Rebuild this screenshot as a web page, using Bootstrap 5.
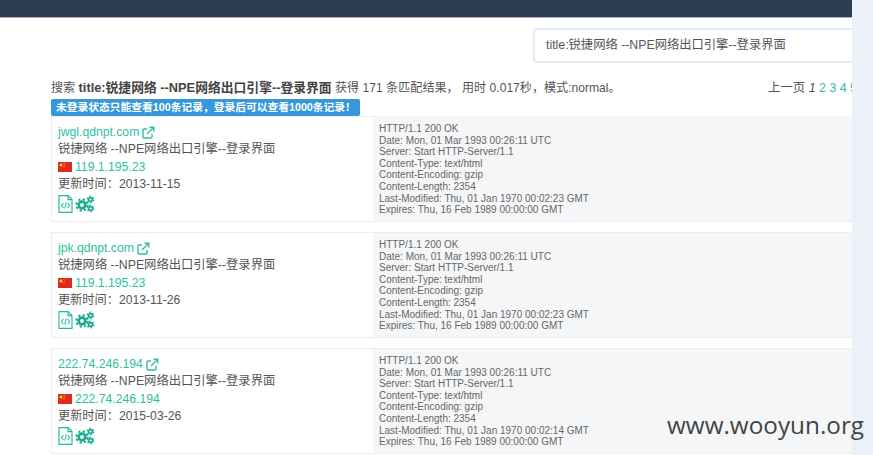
<!DOCTYPE html>
<html lang="zh">
<head>
<meta charset="utf-8">
<title>Search</title>
<link rel="stylesheet" href="https://cdn.jsdelivr.net/npm/bootstrap@5.3.0/dist/css/bootstrap.min.css">
<style>
html,body{height:455px;overflow:hidden}
body{background:#ecf0f8;font-family:"Liberation Sans","Noto Sans CJK SC",sans-serif;font-size:12px;color:#555;position:relative}
.sheet{width:852px;height:455px;background:#fff;overflow:hidden}
.topbar{height:18px;background:#2d3e50;border-bottom:1px solid #a9b2bc}
.searchrow{height:37px;margin-top:10px;padding-left:533px}
.searchbox{width:340px;height:35px;border:2px solid #e4e9f2;border-radius:4px;padding:0 11px;font-size:12.3px;line-height:31px;color:#555;background:#fff;white-space:nowrap}
.summary{margin:15px 0 0 51px;height:16px;line-height:16px;white-space:nowrap;width:801px;overflow:hidden;font-size:12.1px}
.summary b{color:#444;font-size:12.8px}
.pager{color:#555;margin-right:-5px;font-size:12.4px}
.pager i{color:#555;font-weight:normal}
.pager a,.hit a{color:#2ebfa1;text-decoration:none}
.notice{margin:3px 0 0 51px;width:309px;height:17px;line-height:17px;padding-left:5px;background:#3498db;color:#fff;font-weight:700;font-size:10.75px;border-radius:2px;white-space:nowrap}
.hits{margin-left:51px;width:801px}
.hit{height:106px;border:solid #ececf0;border-width:1px 0 1px 1px;margin-bottom:10px;background:#f5f6f8}
.hit:first-child{border-top-color:#f0f0f3}
.hitmain{width:321px;background:#fff;padding:7px 0 0 6px;font-size:12.2px;line-height:17.5px;color:#555}
.hitmain .host{font-size:12.2px;line-height:16px;display:flex;align-items:center;gap:3px}
.hitmain .titleline{margin-top:.5px;font-size:12.3px;white-space:nowrap}
.hitmain .ipline{display:flex;align-items:center;gap:3px;margin-top:.5px}
.hitmain .tools{display:flex;align-items:center;gap:2px;margin-top:1px}
.hitraw{padding:6px 0 0 6px;font-size:10px;line-height:11.6px;color:#666;white-space:nowrap}
.flagmark{width:14px;height:10px;flex:none}
.watermark{position:absolute;left:667px;top:411px;font-family:"Open Sans","DejaVu Sans",sans-serif;font-size:24.3px;line-height:28px;color:#444;white-space:nowrap}
</style>
</head>
<body>
<div class="sheet">
  <div class="topbar"></div>
  <div class="searchrow"><div class="searchbox">title:锐捷网络 --NPE网络出口引擎--登录界面</div></div>
  <div class="summary d-flex justify-content-between">
    <span>搜索 <b>title:锐捷网络 --NPE网络出口引擎--登录界面</b> 获得 171 条匹配结果， 用时 0.017秒，模式:normal。</span>
    <span class="pager">上一页 <i>1</i> <a href="#">2</a> <a href="#">3</a> <a href="#">4</a> <a href="#">5</a></span>
  </div>
  <div class="notice">未登录状态只能查看100条记录，登录后可以查看1000条记录！</div>
  <div class="hits">

    <div class="hit d-flex">
      <div class="hitmain">
        <div class="host"><a href="#">jwgl.qdnpt.com</a><svg width="13" height="13" viewBox="0 0 13 13" fill="none" stroke="#2ebfa1" stroke-width="1.4"><path d="M10 8v3a1 1 0 0 1-1 1H2a1 1 0 0 1-1-1V4a1 1 0 0 1 1-1h3"/><path d="M5 8l6-6M7.5 1.2h4.3v4.3"/></svg></div>
        <div class="titleline">锐捷网络 --NPE网络出口引擎--登录界面</div>
        <div class="ipline"><svg class="flagmark" viewBox="0 0 14 10"><rect width="14" height="10" fill="#de2a1f"/><circle cx="3" cy="3" r="1.6" fill="#f7d21c"/><circle cx="6" cy="1.6" r=".5" fill="#f7d21c"/><circle cx="6.6" cy="3.2" r=".5" fill="#f7d21c"/><circle cx="5.8" cy="5" r=".5" fill="#f7d21c"/></svg><a href="#">119.1.195.23</a></div>
        <div>更新时间：2013-11-15</div>
        <div class="tools"><svg width="15" height="18" viewBox="0 0 15 18" fill="none" stroke="#1abc9c" stroke-width="1.1"><path d="M1 .6h9l4 4v12.8H1z"/><path d="M10 .6v4h4"/><path d="M5.4 8 3.4 10.5l2 2.5M9.6 8l2 2.5-2 2.5M8.2 7.5l-1.4 6"/></svg><svg width="20" height="18" viewBox="0 0 20 18" fill="none" stroke="#16ab8e"><circle cx="7" cy="10" r="3.3" stroke-width="2.8"/><circle cx="7" cy="10" r="5.7" stroke-width="2" stroke-dasharray="2.2 2.27"/><circle cx="15.5" cy="4.5" r="1.9" stroke-width="1.6"/><circle cx="15.5" cy="4.5" r="3.3" stroke-width="1.2" stroke-dasharray="1.7 1.76"/><circle cx="15.5" cy="13.5" r="1.9" stroke-width="1.6"/><circle cx="15.5" cy="13.5" r="3.3" stroke-width="1.2" stroke-dasharray="1.7 1.76"/></svg></div>
      </div>
      <div class="hitraw">HTTP/1.1 200 OK<br>Date: Mon, 01 Mar 1993 00:26:11 UTC<br>Server: Start HTTP-Server/1.1<br>Content-Type: text/html<br>Content-Encoding: gzip<br>Content-Length: 2354<br>Last-Modified: Thu, 01 Jan 1970 00:02:23 GMT<br>Expires: Thu, 16 Feb 1989 00:00:00 GMT</div>
    </div>

    <div class="hit d-flex">
      <div class="hitmain">
        <div class="host"><a href="#">jpk.qdnpt.com</a><svg width="13" height="13" viewBox="0 0 13 13" fill="none" stroke="#2ebfa1" stroke-width="1.4"><path d="M10 8v3a1 1 0 0 1-1 1H2a1 1 0 0 1-1-1V4a1 1 0 0 1 1-1h3"/><path d="M5 8l6-6M7.5 1.2h4.3v4.3"/></svg></div>
        <div class="titleline">锐捷网络 --NPE网络出口引擎--登录界面</div>
        <div class="ipline"><svg class="flagmark" viewBox="0 0 14 10"><rect width="14" height="10" fill="#de2a1f"/><circle cx="3" cy="3" r="1.6" fill="#f7d21c"/><circle cx="6" cy="1.6" r=".5" fill="#f7d21c"/><circle cx="6.6" cy="3.2" r=".5" fill="#f7d21c"/><circle cx="5.8" cy="5" r=".5" fill="#f7d21c"/></svg><a href="#">119.1.195.23</a></div>
        <div>更新时间：2013-11-26</div>
        <div class="tools"><svg width="15" height="18" viewBox="0 0 15 18" fill="none" stroke="#1abc9c" stroke-width="1.1"><path d="M1 .6h9l4 4v12.8H1z"/><path d="M10 .6v4h4"/><path d="M5.4 8 3.4 10.5l2 2.5M9.6 8l2 2.5-2 2.5M8.2 7.5l-1.4 6"/></svg><svg width="20" height="18" viewBox="0 0 20 18" fill="none" stroke="#16ab8e"><circle cx="7" cy="10" r="3.3" stroke-width="2.8"/><circle cx="7" cy="10" r="5.7" stroke-width="2" stroke-dasharray="2.2 2.27"/><circle cx="15.5" cy="4.5" r="1.9" stroke-width="1.6"/><circle cx="15.5" cy="4.5" r="3.3" stroke-width="1.2" stroke-dasharray="1.7 1.76"/><circle cx="15.5" cy="13.5" r="1.9" stroke-width="1.6"/><circle cx="15.5" cy="13.5" r="3.3" stroke-width="1.2" stroke-dasharray="1.7 1.76"/></svg></div>
      </div>
      <div class="hitraw">HTTP/1.1 200 OK<br>Date: Mon, 01 Mar 1993 00:26:11 UTC<br>Server: Start HTTP-Server/1.1<br>Content-Type: text/html<br>Content-Encoding: gzip<br>Content-Length: 2354<br>Last-Modified: Thu, 01 Jan 1970 00:02:23 GMT<br>Expires: Thu, 16 Feb 1989 00:00:00 GMT</div>
    </div>

    <div class="hit d-flex">
      <div class="hitmain">
        <div class="host"><a href="#">222.74.246.194</a><svg width="13" height="13" viewBox="0 0 13 13" fill="none" stroke="#2ebfa1" stroke-width="1.4"><path d="M10 8v3a1 1 0 0 1-1 1H2a1 1 0 0 1-1-1V4a1 1 0 0 1 1-1h3"/><path d="M5 8l6-6M7.5 1.2h4.3v4.3"/></svg></div>
        <div class="titleline">锐捷网络 --NPE网络出口引擎--登录界面</div>
        <div class="ipline"><svg class="flagmark" viewBox="0 0 14 10"><rect width="14" height="10" fill="#de2a1f"/><circle cx="3" cy="3" r="1.6" fill="#f7d21c"/><circle cx="6" cy="1.6" r=".5" fill="#f7d21c"/><circle cx="6.6" cy="3.2" r=".5" fill="#f7d21c"/><circle cx="5.8" cy="5" r=".5" fill="#f7d21c"/></svg><a href="#">222.74.246.194</a></div>
        <div>更新时间：2015-03-26</div>
        <div class="tools"><svg width="15" height="18" viewBox="0 0 15 18" fill="none" stroke="#1abc9c" stroke-width="1.1"><path d="M1 .6h9l4 4v12.8H1z"/><path d="M10 .6v4h4"/><path d="M5.4 8 3.4 10.5l2 2.5M9.6 8l2 2.5-2 2.5M8.2 7.5l-1.4 6"/></svg><svg width="20" height="18" viewBox="0 0 20 18" fill="none" stroke="#16ab8e"><circle cx="7" cy="10" r="3.3" stroke-width="2.8"/><circle cx="7" cy="10" r="5.7" stroke-width="2" stroke-dasharray="2.2 2.27"/><circle cx="15.5" cy="4.5" r="1.9" stroke-width="1.6"/><circle cx="15.5" cy="4.5" r="3.3" stroke-width="1.2" stroke-dasharray="1.7 1.76"/><circle cx="15.5" cy="13.5" r="1.9" stroke-width="1.6"/><circle cx="15.5" cy="13.5" r="3.3" stroke-width="1.2" stroke-dasharray="1.7 1.76"/></svg></div>
      </div>
      <div class="hitraw">HTTP/1.1 200 OK<br>Date: Mon, 01 Mar 1993 00:26:11 UTC<br>Server: Start HTTP-Server/1.1<br>Content-Type: text/html<br>Content-Encoding: gzip<br>Content-Length: 2354<br>Last-Modified: Thu, 01 Jan 1970 00:02:14 GMT<br>Expires: Thu, 16 Feb 1989 00:00:00 GMT</div>
    </div>

  </div>
</div>
<div class="watermark">www.wooyun.org</div>
<script src="https://cdn.jsdelivr.net/npm/bootstrap@5.3.0/dist/js/bootstrap.bundle.min.js"></script>
</body>
</html>
